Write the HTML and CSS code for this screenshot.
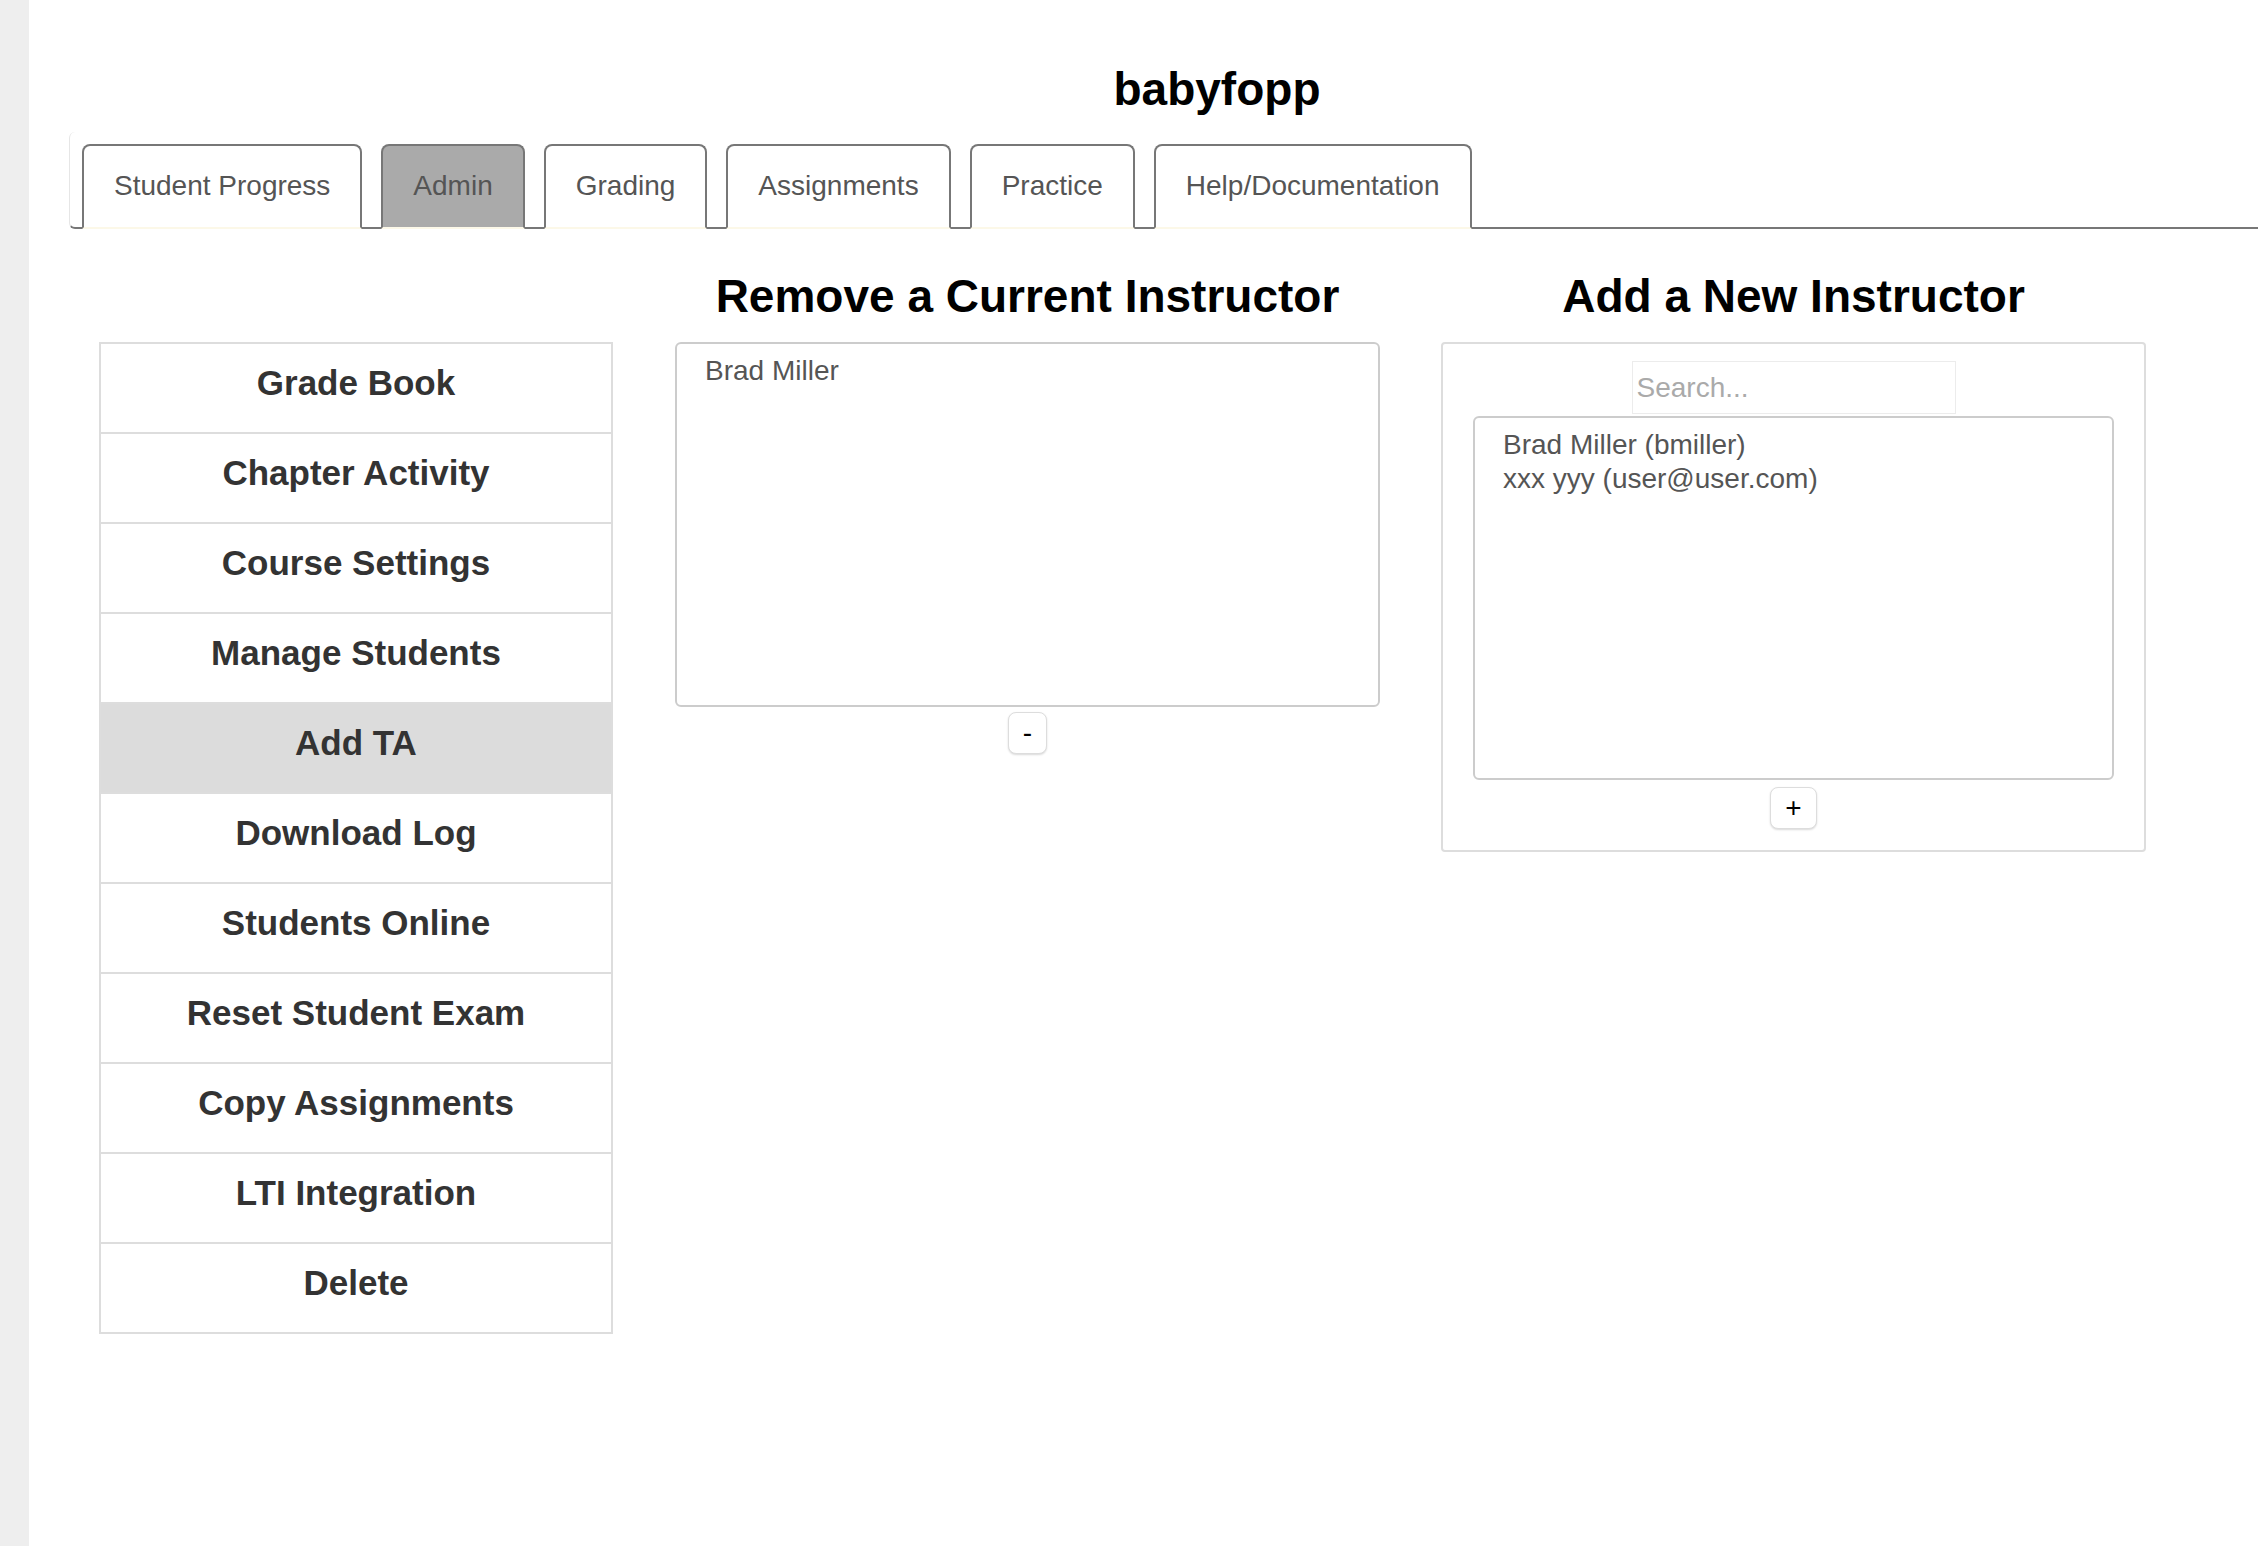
FILE: index.html
```html
<!DOCTYPE html>
<html lang="en">
<head>
<meta charset="utf-8">
<title>babyfopp - Admin</title>
<link rel="stylesheet" href="styles.css">
</head>
<body>
<div class="shell">
  <aside class="sidebar"></aside>
  <main class="page">
    <h1 class="course-title">babyfopp</h1>
    <ul class="tabs">
      <li class="tab"><a href="#">Student Progress</a></li>
      <li class="tab tab-active"><a href="#">Admin</a></li>
      <li class="tab"><a href="#">Grading</a></li>
      <li class="tab"><a href="#">Assignments</a></li>
      <li class="tab"><a href="#">Practice</a></li>
      <li class="tab"><a href="#">Help/Documentation</a></li>
    </ul>
    <div class="admin-grid">
      <h2 class="col-heading heading-remove">Remove a Current Instructor</h2>
      <h2 class="col-heading heading-add">Add a New Instructor</h2>
      <nav class="admin-nav">
        <a class="nav-item" href="#">Grade Book</a>
        <a class="nav-item" href="#">Chapter Activity</a>
        <a class="nav-item" href="#">Course Settings</a>
        <a class="nav-item" href="#">Manage Students</a>
        <a class="nav-item nav-item-active" href="#">Add TA</a>
        <a class="nav-item" href="#">Download Log</a>
        <a class="nav-item" href="#">Students Online</a>
        <a class="nav-item" href="#">Reset Student Exam</a>
        <a class="nav-item" href="#">Copy Assignments</a>
        <a class="nav-item" href="#">LTI Integration</a>
        <a class="nav-item" href="#">Delete</a>
      </nav>
      <section class="remove-col">
        <div class="listbox remove-list">
          <div class="list-option">Brad Miller</div>
        </div>
        <button class="small-btn">-</button>
      </section>
      <section class="add-col">
        <div class="add-panel">
          <input class="search-input" type="text" placeholder="Search...">
          <div class="listbox add-list">
            <div class="list-option">Brad Miller (bmiller)</div>
            <div class="list-option">xxx yyy (user@user.com)</div>
          </div>
          <button class="small-btn plus-btn">+</button>
        </div>
      </section>
    </div>
  </main>
</div>
</body>
</html>
```

FILE: styles.css
```css
html, body {
  margin: 0;
  padding: 0;
  background: #ffffff;
  overflow: hidden;
  font-family: "Liberation Sans", Arial, Helvetica, sans-serif;
}

.shell {
  display: flex;
  min-height: 1546px;
}

.sidebar {
  flex: 0 0 29px;
  background: #eeeeee;
}

.page {
  flex: 0 0 2296px;
  width: 2296px;
  margin-left: 40px;
}

.course-title {
  margin: 62px 0 16px;
  font-size: 46px;
  line-height: 54px;
  font-weight: 700;
  color: #000000;
  text-align: center;
}

.tabs {
  list-style: none;
  margin: 0;
  padding: 12px 0 0 12px;
  display: flex;
  gap: 19px;
  border-left: 1px solid #e6e6e6;
  border-bottom: 2px solid #777777;
  border-radius: 6px 0 0 6px;
}

.tab {
  margin-bottom: -2px;
  border: 2px solid #777777;
  border-bottom: 2px solid #fcf8e8;
  border-radius: 8px 8px 0 0;
  background: #ffffff;
}

.tab a {
  display: block;
  padding: 24px 30px 25px;
  font-size: 28px;
  line-height: 32px;
  color: #555555;
  text-decoration: none;
}

.tab-active {
  background: #aaaaaa;
}

.admin-grid {
  display: grid;
  grid-template-columns: 515px 705px 705px;
  column-gap: 61px;
  padding-left: 30px;
}

.col-heading {
  margin: 40px 0 19px;
  font-size: 46px;
  line-height: 54px;
  font-weight: 700;
  color: #000000;
  text-align: center;
}

.heading-remove {
  grid-column: 2;
  grid-row: 1;
}

.heading-add {
  grid-column: 3;
  grid-row: 1;
}

.admin-nav {
  grid-column: 1;
  grid-row: 2;
  box-sizing: border-box;
  width: 514px;
  align-self: start;
  display: flex;
  flex-direction: column;
  border: 2px solid #dddddd;
}

.nav-item {
  display: block;
  height: 88px;
  box-sizing: border-box;
  padding-top: 19px;
  font-size: 35px;
  line-height: 40px;
  font-weight: 700;
  color: #333333;
  text-align: center;
  text-decoration: none;
  background: #ffffff;
}

.nav-item + .nav-item {
  border-top: 2px solid #dddddd;
  height: 90px;
}

.nav-item-active {
  background: #dcdcdc;
}

.remove-col {
  grid-column: 2;
  grid-row: 2;
  align-self: start;
}

.add-col {
  grid-column: 3;
  grid-row: 2;
  align-self: start;
}

.listbox {
  box-sizing: border-box;
  border: 2px solid #cccccc;
  border-radius: 6px;
  padding: 10px 28px;
  background: #ffffff;
}

.remove-list {
  height: 365px;
}

.list-option {
  font-size: 28px;
  line-height: 34px;
  color: #555555;
}

.small-btn {
  display: block;
  margin: 5px auto 0;
  height: 42px;
  padding: 0 14px;
  box-sizing: border-box;
  border: 1px solid #dddddd;
  border-radius: 8px;
  background: #ffffff;
  box-shadow: 0 1px 2px rgba(0, 0, 0, 0.15);
  font-family: "Liberation Sans", Arial, sans-serif;
  font-size: 28px;
  line-height: 38px;
  color: #000000;
}

.plus-btn {
  margin-top: 7px;
  font-weight: 300;
}

.add-panel {
  box-sizing: border-box;
  border: 2px solid #dddddd;
  border-radius: 4px;
  padding: 17px 30px 21px;
}

.search-input {
  display: block;
  box-sizing: border-box;
  width: 324px;
  height: 53px;
  margin: 0 auto;
  padding: 0 4px;
  border: 1px solid #ececec;
  font-family: "Liberation Sans", Arial, sans-serif;
  font-size: 28px;
  color: #555555;
  outline: none;
}

.search-input::placeholder {
  color: #aaaaaa;
}

.add-list {
  height: 364px;
  margin-top: 2px;
}
```
